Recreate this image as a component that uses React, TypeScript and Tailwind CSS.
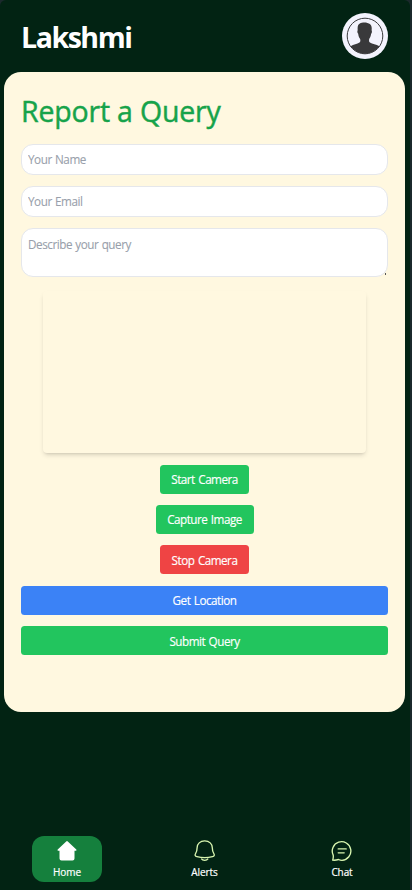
import React from 'react';

const field =
  "block w-full rounded-[12px] border border-gray-200 bg-white px-[6px] pb-[2px] text-[11.700px] tracking-[-0.450px] [word-spacing:0.700px] text-gray-900 placeholder:text-[#999fab] outline-none [-webkit-text-stroke:0.100px]";
const button = "h-[29px] rounded-[3.5px] text-[11.700px] leading-[28px] tracking-[-0.500px] [word-spacing:1px] text-white [-webkit-text-stroke:0.150px]";

function Avatar() {
  return (
    <svg className="size-[46px]" viewBox="0 0 46 46">
      <circle cx="23" cy="23" r="23" fill="#f3f3fd" />
      <circle cx="23" cy="23" r="17.8" fill="none" stroke="#3a3a3c" strokeWidth="1" />
      <path
        d="M8.600 33.300c3-1.800 6.500-2.300 8.900-3.700 1.100-.8 1-2.600.5-3.800-1.300-1.700-1.600-3.300-1.800-5-.9-.5-1.100-2.900-.5-3.500-.3-3.100.1-6.100 2.200-6.800 2.400-1.500 7.800-1.300 10 .6 1.900 1.600 2 3.800 1.700 6.200.6.600.3 3-.5 3.500-.2 1.800-.6 3.500-1.800 5-.4 1.300-.5 3 .6 3.800 2.500 1.400 6.300 2 9.500 3.700A17.500 17.500 0 0 1 8.600 33.300Z"
        fill="#39393b"
      />
    </svg>
  );
}

export default function App() {
  return (
    <div className="flex h-[890px] w-[412px] bg-[#1b292c] font-['Open_Sans','Noto_Sans',sans-serif]">
      <div className="flex w-[410px] flex-col rounded-t-[6px] bg-[#022313]">
        <header className="flex h-[72px] items-center justify-between pl-[21px] pr-[22px]">
          <h1 className="text-[28.500px] leading-[36px] font-bold tracking-[-1.450px] text-white mt-[1px]">Lakshmi</h1>
          <Avatar />
        </header>
        <main className="ml-[4px] mr-[5px] flex h-[640px] flex-col rounded-[17px] bg-[#fff8e0] px-[17px] pt-[21px]">
          <h2 className="mb-[15px] h-[36px] text-[28.500px] leading-[37px] font-normal tracking-[-0.180px] text-[#16a34a] [-webkit-text-stroke:0.450px]">Report a Query</h2>
          <form className="flex flex-col" onSubmit={(e) => e.preventDefault()}>
            <input className={field + " h-[31px]"} placeholder="Your Name" />
            <input className={field + " mt-[11px] h-[31px]"} placeholder="Your Email" />
            <div className="relative mt-[11px] h-[49px]">
              <textarea className={field + " h-[49px] resize-none pt-[7px] leading-[17px]"} placeholder="Describe your query" />
              <span className="absolute right-[2px] bottom-[2px] h-[2px] w-px bg-[#555]" />
            </div>
            <div className="mt-[14px] h-[162px] w-[323px] self-center rounded-[4px] bg-[#fff8e0] shadow-[0_3px_5px_-1px_rgb(0_0_0/0.14),0_2px_3px_-2px_rgb(0_0_0/0.14)]" />
            <div className="mt-[11.500px] flex flex-col items-center gap-[11.400px]">
              <button type="button" className={button + " w-[89px] bg-[#22c55e]"}>Start Camera</button>
              <button type="button" className={button + " w-[98px] bg-[#22c55e]"}>Capture Image</button>
              <button type="button" className={button + " w-[89px] bg-[#ef4444]"}>Stop Camera</button>
              <button type="button" className={button + " w-full bg-[#3b82f6]"}>Get Location</button>
              <button type="submit" className={button + " w-full bg-[#22c55e]"}>Submit Query</button>
            </div>
          </form>
        </main>
        <nav className="mt-auto mb-[8px] flex justify-between pl-[32px] pr-[33px] text-[10px] leading-[14px] tracking-[-0.1px] text-white [-webkit-text-stroke:0.200px]">
          <a className="flex h-[46px] w-[70px] flex-col items-center rounded-[12px] bg-[#15803d] pt-[4px]">
            <svg className="size-[22px]" viewBox="0 0 22 22" fill="white">
              <path d="M10.200 1.400q.8-.7 1.600 0l8.500 8.200q.7.900-.3 1.100H18.500v7.800q0 2-2 2h-11q-2 0-2-2v-7.800H2q-1-.2-.3-1.100Z" />
            </svg>
            <span className="mt-[3px]">Home</span>
          </a>
          <a className="flex h-[46px] w-[70px] flex-col items-center pt-[4px]">
            <svg className="size-[22px]" viewBox="0 0 22 22" fill="none" stroke="#d9f6b0" strokeWidth="1.350">
              <path d="M10.700 .9c-4.600 0-7.600 3-7.600 6.800 0 3.200-.5 4.100-1.500 5.800-1 1.700-.5 2.800 1.300 3.200 5 1.100 10.600 1.100 15.600 0 1.800-.4 2.300-1.500 1.300-3.200-1-1.700-1.500-2.600-1.500-5.800 0-3.800-3-6.800-7.600-6.800Z" />
              <path d="M7.200 18.700c1.700 2.300 5.300 2.300 7 0" />
            </svg>
            <span className="mt-[3px]">Alerts</span>
          </a>
          <a className="flex h-[46px] w-[70px] flex-col items-center pt-[4px]">
            <svg className="size-[22px]" viewBox="0 0 22 22" fill="none" stroke="#d9f6b0" strokeWidth="1.350" strokeLinecap="round" strokeLinejoin="round">
              <path d="M1.700 20.100c.6-1.800.8-3.200.5-5a9.300 9.300 0 1 1 8.800 5.200c-1.300 0-2.400-.3-3.500-.8-1.900.6-3.700.9-5.800.6Z" />
              <path d="M7.200 8.900h8M7.200 12.800h6" />
            </svg>
            <span className="mt-[3px]">Chat</span>
          </a>
        </nav>
      </div>
    </div>
  );
}
